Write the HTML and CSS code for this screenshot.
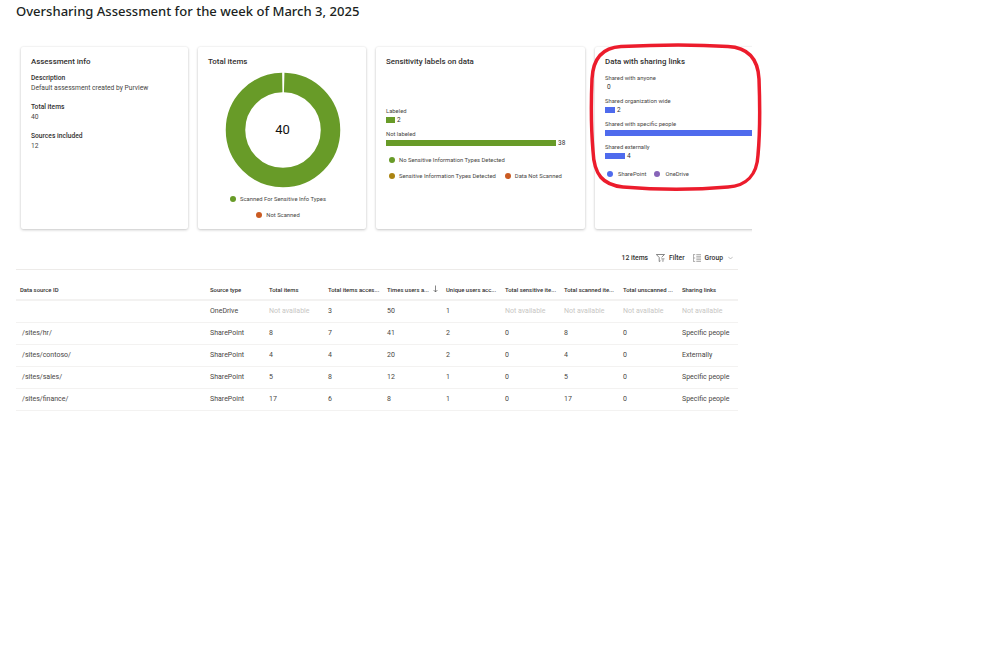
FILE: index.html
```html
<!DOCTYPE html>
<html lang="en">
<head>
<meta charset="utf-8">
<title>Oversharing Assessment</title>
<link rel="stylesheet" href="styles.css">
</head>
<body>
<main class="page">
  <h1 class="title">Oversharing Assessment for the week of March 3, 2025</h1>

  <section class="cards">
    <article class="card card-info">
      <h2 class="card-title">Assessment info</h2>
      <dl class="facts">
        <div class="fact"><dt>Description</dt><dd>Default assessment created by Purview</dd></div>
        <div class="fact"><dt>Total items</dt><dd>40</dd></div>
        <div class="fact"><dt>Sources included</dt><dd>12</dd></div>
      </dl>
    </article>

    <article class="card card-total">
      <h2 class="card-title">Total items</h2>
      <div class="donut">
        <svg width="116" height="116" viewBox="0 0 116 116" aria-hidden="true">
          <circle cx="58" cy="58" r="47.5" fill="none" stroke="#689b28" stroke-width="19.5" stroke-dasharray="296 2.46" stroke-dashoffset="-1.23" transform="rotate(-90 58 58)"/>
        </svg>
        <span class="donut-value">40</span>
      </div>
      <ul class="legend legend-center">
        <li class="legend-item"><i class="dot dot-green"></i>Scanned For Sensitive Info Types</li>
        <li class="legend-item"><i class="dot dot-orange"></i>Not Scanned</li>
      </ul>
    </article>

    <article class="card card-labels">
      <h2 class="card-title">Sensitivity labels on data</h2>
      <div class="bars bars-labels">
        <div class="bar-group">
          <div class="bar-label">Labeled</div>
          <div class="bar-row"><span class="bar bar-green w-9"></span><span class="bar-num">2</span></div>
        </div>
        <div class="bar-group">
          <div class="bar-label">Not labeled</div>
          <div class="bar-row"><span class="bar bar-green w-170"></span><span class="bar-num">38</span></div>
        </div>
      </div>
      <ul class="legend legend-left">
        <li class="legend-item"><i class="dot dot-green"></i>No Sensitive Information Types Detected</li>
        <li class="legend-pair">
          <span class="legend-item"><i class="dot dot-gold"></i>Sensitive Information Types Detected</span>
          <span class="legend-item"><i class="dot dot-orange"></i>Data Not Scanned</span>
        </li>
      </ul>
    </article>

    <article class="card card-links">
      <h2 class="card-title">Data with sharing links</h2>
      <div class="bars">
        <div class="bar-group">
          <div class="bar-label">Shared with anyone</div>
          <div class="bar-row"><span class="bar-num bar-num-zero">0</span></div>
        </div>
        <div class="bar-group">
          <div class="bar-label">Shared organization wide</div>
          <div class="bar-row"><span class="bar bar-blue w-10"></span><span class="bar-num">2</span></div>
        </div>
        <div class="bar-group">
          <div class="bar-label">Shared with specific people</div>
          <div class="bar-row"><span class="bar bar-blue w-150"></span></div>
        </div>
        <div class="bar-group">
          <div class="bar-label">Shared externally</div>
          <div class="bar-row"><span class="bar bar-blue w-20"></span><span class="bar-num">4</span></div>
        </div>
      </div>
      <ul class="legend legend-links">
        <li class="legend-item"><i class="dot dot-blue"></i>SharePoint</li>
        <li class="legend-item"><i class="dot dot-purple"></i>OneDrive</li>
      </ul>
    </article>
  </section>

  <svg class="highlight" width="174" height="148" viewBox="0 0 174 148" aria-hidden="true">
    <path d="M32 3.500 C70 1.500 110 1.500 139 3.500 C159 4.500 169 16 170 36 C171 62 171 90 169 112 C168 132 157 143 139 144 C105 147 70 147 34 144 C14 142 5 132 4 108 C2 84 2 60 3 36 C4 15 14 4.500 32 3.500 Z" fill="none" stroke="#ec1c2c" stroke-width="3.500"/>
  </svg>

  <div class="toolbar">
    <span class="count">12 items</span>
    <span class="tool">
      <svg width="9" height="8" viewBox="0 0 9 8" aria-hidden="true"><path d="M.3 .5h8.200L5.600 3.300M.3 .5l2.900 3v4l1.300-.7" fill="none" stroke="#555" stroke-width=".7"/><path d="M5.300 4.800h3.200M5.800 6h2.200M6.300 7.300h1.200" fill="none" stroke="#777" stroke-width=".7"/></svg>
      Filter
    </span>
    <span class="tool">
      <svg width="8" height="8" viewBox="0 0 8 8" aria-hidden="true"><path d="M.4 .3v7.400M.4 .6h1.800M.4 4h1.800M.4 7.400h1.800M3.300 .6H8M3.300 2.300H8M3.300 4H8M3.300 5.700H8M3.300 7.400H8" fill="none" stroke="#8a8886" stroke-width=".7"/></svg>
      Group
      <svg class="chev" width="5" height="4" viewBox="0 0 5 4" aria-hidden="true"><path d="M.3 .8l2.200 2.200L4.700 .8" fill="none" stroke="#999" stroke-width=".6"/></svg>
    </span>
  </div>

  <table class="grid">
    <colgroup>
      <col class="col-id"><col class="col-n"><col class="col-n"><col class="col-n"><col class="col-n"><col class="col-n"><col class="col-n"><col class="col-n"><col class="col-n"><col class="col-last">
    </colgroup>
    <thead>
      <tr>
        <th>Data source ID</th><th>Source type</th><th>Total items</th><th>Total items acces...</th>
        <th>Times users a...<svg class="sort" width="5" height="8" viewBox="0 0 5 8" aria-hidden="true"><path d="M2.500 .5v6.500M.6 5l1.900 2L4.400 5" fill="none" stroke="#555" stroke-width=".7"/></svg></th>
        <th>Unique users acc...</th><th>Total sensitive ite...</th><th>Total scanned ite...</th><th>Total unscanned ...</th><th>Sharing links</th>
      </tr>
    </thead>
    <tbody>
      <tr><td></td><td>OneDrive</td><td class="na">Not available</td><td>3</td><td>50</td><td>1</td><td class="na">Not available</td><td class="na">Not available</td><td class="na">Not available</td><td class="na">Not available</td></tr>
      <tr><td class="path">/sites/hr/</td><td>SharePoint</td><td>8</td><td>7</td><td>41</td><td>2</td><td>0</td><td>8</td><td>0</td><td>Specific people</td></tr>
      <tr><td class="path">/sites/contoso/</td><td>SharePoint</td><td>4</td><td>4</td><td>20</td><td>2</td><td>0</td><td>4</td><td>0</td><td>Externally</td></tr>
      <tr><td class="path">/sites/sales/</td><td>SharePoint</td><td>5</td><td>8</td><td>12</td><td>1</td><td>0</td><td>5</td><td>0</td><td>Specific people</td></tr>
      <tr><td class="path">/sites/finance/</td><td>SharePoint</td><td>17</td><td>6</td><td>8</td><td>1</td><td>0</td><td>17</td><td>0</td><td>Specific people</td></tr>
    </tbody>
  </table>
</main>
</body>
</html>
```
FILE: styles.css
```css
* { box-sizing: border-box; }
html, body { margin: 0; background: #fff; }
body {
  font-family: Roboto, "Noto Sans", sans-serif;
  font-size: 6.700px;
  line-height: 10px;
  color: #323130;
}
.page { position: relative; width: 999px; height: 666px; padding: 0 0 0 16px; }

.title {
  margin: 0;
  padding-top: 1px;
  height: 45px;
  font-family: "Noto Sans", sans-serif;
  font-size: 13.050px;
  line-height: 20px;
  font-weight: 500;
  color: #201f1e;
}

.cards {
  display: flex;
  gap: 10px;
  width: 736px;
  height: 194px;
  padding: 2px 0 0 5px;
  overflow: hidden;
}
.card {
  flex: none;
  height: 182px;
  padding: 9px 10px;
  background: #fff;
  border-radius: 2px;
  box-shadow: 0 1px 3px rgba(0, 0, 0, .2), 0 0 2px rgba(0, 0, 0, .08);
}
.card-info { width: 167px; }
.card-total { width: 168px; }
.card-labels { width: 209px; }
.card-links { width: 168px; }
.card-title {
  margin: 0;
  font-size: 7.900px;
  line-height: 11px;
  font-weight: 500;
  color: #323130;
}

.facts { margin: 6px 0 0; }
.fact { margin-bottom: 9px; }
.fact dt { font-weight: 500; }
.fact dd { margin: 0; color: #484644; }

.donut {
  position: relative;
  width: 116px;
  height: 116px;
  margin: 5px 0 0 16.500px;
}
.donut svg { display: block; }
.donut-value {
  position: absolute;
  inset: 0;
  display: flex;
  align-items: center;
  justify-content: center;
  font-size: 13px;
  font-weight: 400;
  color: #111;
}

.legend { margin: 0; padding: 0; list-style: none; font-size: 5.850px; color: #484644; }
.legend-item { display: flex; align-items: center; gap: 4px; white-space: nowrap; }
.dot { flex: none; width: 6px; height: 6px; border-radius: 50%; }
.dot-green { background: #689b28; }
.dot-orange { background: #ca5b22; }
.dot-gold { background: #ab8410; }
.dot-blue { background: #4f6bed; }
.dot-purple { background: #8764b8; }

.legend-center { display: flex; flex-direction: column; align-items: center; gap: 6px; margin-top: 6px; padding-right: 8px; }

.bars-labels { margin-top: 40px; }
.bar-group { margin-bottom: 6px; }
.bar-label { font-size: 5.850px; line-height: 8px; color: #484644; }
.bar-row { display: flex; align-items: center; gap: 2px; height: 8px; margin-top: 1px; font-size: 6.500px; }
.bar { height: 6px; flex: none; }
.bar-green { background: #689b28; }
.bar-blue { background: #4f6bed; }
.w-9 { width: 9px; }
.w-10 { width: 10px; }
.w-20 { width: 20px; }
.w-150 { width: 150px; }
.w-170 { width: 170px; }
.bar-num-zero { margin-left: 2px; }
.card-links .bars { margin-top: 7px; }

.legend-left { display: flex; flex-direction: column; gap: 6px; margin: 8px 0 0 3px; }
.legend-pair { display: flex; gap: 9px; }
.legend-links { display: flex; gap: 8px; margin: 9px 0 0 2px; }
.legend-links .legend-item { gap: 5px; }

.highlight { position: absolute; left: 589px; top: 43px; }

.toolbar {
  display: flex;
  justify-content: flex-end;
  align-items: center;
  gap: 8px;
  width: 722px;
  height: 31px;
  padding: 8px 5px 0 0;
  border-bottom: 1px solid #edebe9;
  font-size: 6.800px;
  font-weight: 500;
}
.tool { display: flex; align-items: center; gap: 4px; font-weight: 500; }
.chev { margin-left: 1px; }

.grid {
  width: 722px;
  table-layout: fixed;
  border-collapse: collapse;
}
.col-id { width: 190px; }
.col-n { width: 59px; }
.col-last { width: 60px; }
.grid th, .grid td {
  padding: 0 0 0 4px;
  text-align: left;
  white-space: nowrap;
  overflow: hidden;
}
.grid th {
  height: 30px;
  padding-top: 10px;
  font-size: 5.900px;
  font-weight: 500;
  border-bottom: 2px solid #f3f2f1;
}
.grid td {
  height: 22px;
  font-size: 7px;
  color: #484644;
  border-bottom: 1px solid #f3f2f1;
}
.grid td.path { padding-left: 6px; }
.grid td.na { color: #c8c6c4; }
.sort { margin-left: 4px; vertical-align: -1px; }
```
